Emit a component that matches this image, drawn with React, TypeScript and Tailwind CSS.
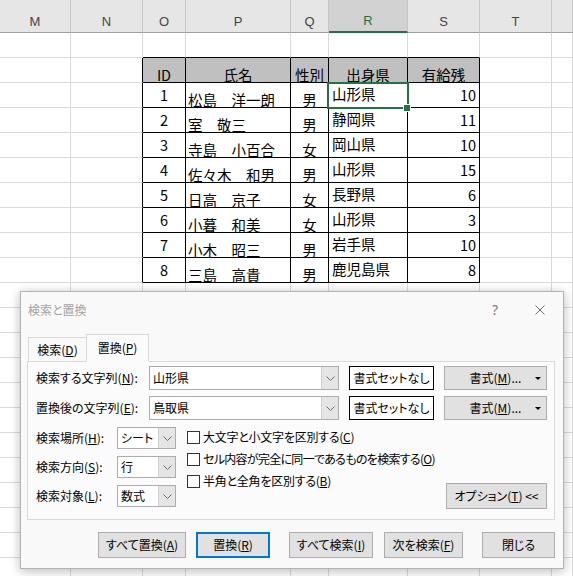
import clsx from "clsx";

const COLS = ["M", "N", "O", "P", "Q", "R", "S", "T", ""];

const HEAD = ["ID", "氏名", "性別", "出身県", "有給残"];

const DATA: [string, string, string, string, string][] = [
  ["1", "松島\u3000洋一朗", "男", "山形県", "10"],
  ["2", "室\u3000敬三", "男", "静岡県", "11"],
  ["3", "寺島\u3000小百合", "女", "岡山県", "10"],
  ["4", "佐々木\u3000和男", "男", "山形県", "15"],
  ["5", "日高\u3000京子", "女", "長野県", "6"],
  ["6", "小暮\u3000和美", "女", "山形県", "3"],
  ["7", "小木\u3000昭三", "男", "岩手県", "10"],
  ["8", "三島\u3000高貴", "男", "鹿児島県", "8"],
];

const ALIGN = [
  "",
  "",
  "justify-center items-end pb-[5px]",
  "justify-start items-end pl-[2px]",
  "justify-center items-end",
  "justify-start items-end pl-[3px] pb-[6px]",
  "justify-end items-end pr-[3px] pb-[5px]",
];

const GRID =
  "grid grid-cols-[71px_72px_43px_105px_38px_79px_72px_72px_1fr]";

function Cell({ r, c }: { r: number; c: number }) {
  const inTable = r >= 1 && r <= 9 && c >= 2 && c <= 6;
  const rightBlack = inTable || (c === 1 && r >= 1 && r <= 9);
  const bottomBlack = inTable || (r === 0 && c >= 2 && c <= 6);
  const selected = r === 2 && c === 5;

  let text = "";
  if (r === 1 && inTable) text = HEAD[c - 2];
  if (r >= 2 && inTable) text = DATA[r - 2][c - 2];

  return (
    <div
      className={clsx(
        "flex border-r border-b whitespace-nowrap",
        rightBlack ? "border-r-black" : "border-r-[#dadada]",
        bottomBlack ? "border-b-black" : "border-b-[#dadada]",
        r === 1 && inTable && "bg-[#c0c0c0] justify-center items-end",
        r >= 2 && inTable && ALIGN[c],
        selected && "relative"
      )}
    >
      {text}
      {selected && (
        <>
          <div className="absolute -left-[2px] -top-[1px] w-[82px] h-[27px] border-2 border-[#217346]" />
          <div className="absolute left-[74px] top-[21px] w-[8px] h-[8px] border border-white bg-[#217346]" />
        </>
      )}
    </div>
  );
}

function Sheet() {
  const rows = Array.from({ length: 22 }, (_, i) => i);
  return (
    <div className="font-['Noto_Sans_CJK_JP',sans-serif] text-[14.5px] leading-none text-black">
      <div className={clsx(GRID, "h-[33px] bg-[#e6e6e6]")}>
        {COLS.map((k) => (
          <div
            key={k || "x"}
            className={clsx(
              "flex items-center justify-center pt-[10px] border-r border-r-[#c6c6c6] font-['Liberation_Sans',sans-serif] text-[13px]",
              k === "R"
                ? "bg-[#d2d2d2] border-b-2 border-b-[#217346] text-[#217346]"
                : "border-b border-b-[#9e9e9e] text-[#444]"
            )}
          >
            {k}
          </div>
        ))}
      </div>
      {rows.map((r) => (
        <div key={r} className={clsx(GRID, "h-[25px]")}>
          {COLS.map((_, c) => (
            <Cell key={c} r={r} c={c} />
          ))}
        </div>
      ))}
    </div>
  );
}

function Chevron() {
  return (
    <svg width="9" height="5" viewBox="0 0 9 5">
      <polyline points="0.5,0.5 4.5,4.5 8.5,0.5" fill="none" stroke="#6b6b6b" strokeWidth="1" />
    </svg>
  );
}

function Combo({ value, className }: { value: string; className: string }) {
  return (
    <div className={clsx("flex border border-[#acacac] bg-white", className)}>
      <div className="flex-1 flex items-center pl-[3px]">{value}</div>
      <div className="w-[17px] flex items-center justify-center bg-[#e5e5e5] border-l border-[#d0d0d0]">
        <Chevron />
      </div>
    </div>
  );
}

function Btn({
  children,
  className,
  focused,
}: {
  children: React.ReactNode;
  className: string;
  focused?: boolean;
}) {
  return (
    <div
      className={clsx(
        "h-[26px] flex items-center justify-center bg-[#e1e1e1] whitespace-nowrap",
        focused ? "border-2 border-[#0078d7]" : "border border-[#adadad]",
        className
      )}
    >
      {children}
    </div>
  );
}

function FormatBtn() {
  return (
    <div className="relative ml-[10px] w-[103px] h-[24px] flex items-center justify-center bg-[#e1e1e1] border border-[#adadad]">
      書式(<u>M</u>)...
      <svg className="absolute right-[5px] top-[10px]" width="6" height="3" viewBox="0 0 6 3">
        <polygon points="0,0 6,0 3,3" fill="#000" />
      </svg>
    </div>
  );
}

function Check({ children, className }: { children: React.ReactNode; className: string }) {
  return (
    <div className="h-[22px] flex items-center whitespace-nowrap">
      <div className="w-[13px] h-[13px] border border-[#333] bg-white" />
      <span className={clsx("ml-[3px]", className)}>{children}</span>
    </div>
  );
}

function Dialog() {
  return (
    <div className="absolute left-[20px] top-[291px] w-[544px] h-[278px] flex flex-col bg-[#f9f9f9] border border-[#b4b4b4] shadow-[0_2px_10px_rgba(0,0,0,0.28)] font-['Noto_Sans_CJK_JP',sans-serif] text-[12px] leading-none text-black [font-feature-settings:'palt']">
      <div className="h-[42px] pb-[7px] flex items-center pl-[7px] pr-[18px]">
        <span className="text-[#a3a3a3]">検索と置換</span>
        <span className="ml-auto text-[14px] text-[#7a7a7a] font-['Noto_Sans',sans-serif]">?</span>
        <svg className="ml-[37px]" width="10" height="10" viewBox="0 0 10 10">
          <path d="M0.5 0.5L9.5 9.5M9.5 0.5L0.5 9.5" stroke="#707070" strokeWidth="1" />
        </svg>
      </div>

      <div className="flex items-end h-[28px] ml-[7px] -mb-px relative z-10">
        <div className="w-[58px] h-[25px] flex items-center justify-center border border-r-0 border-[#d9d9d9]">
          検索(<u>D</u>)
        </div>
        <div className="w-[63px] h-[28px] flex items-center justify-center pb-[1px] border border-[#d9d9d9] border-b-[#fbfbfb] bg-[#fbfbfb]">
          置換(<u>P</u>)
        </div>
      </div>

      <div className="ml-[6px] mr-[8px] border border-[#d9d9d9] bg-[#fbfbfb] pt-[4px] pl-[8px] pr-[7px] pb-[10px]">
        <div className="flex items-center h-[24px]">
          <div className="w-[113px]">
            検索する文字列(<u>N</u>):
          </div>
          <Combo value="山形県" className="w-[190px] h-[24px]" />
          <div className="ml-[10px] w-[85px] h-[24px] flex items-center justify-center border border-black bg-white">
            書式セットなし
          </div>
          <FormatBtn />
        </div>
        <div className="flex items-center h-[24px] mt-[6px]">
          <div className="w-[113px]">
            置換後の文字列(<u>E</u>):
          </div>
          <Combo value="鳥取県" className="w-[190px] h-[24px]" />
          <div className="ml-[10px] w-[85px] h-[24px] flex items-center justify-center border border-black bg-white">
            書式セットなし
          </div>
          <FormatBtn />
        </div>

        <div className="mt-[6px] h-[83px] flex">
          <div className="flex flex-col pt-[1px] gap-[7px]">
            <div className="flex items-center h-[22px]">
              <div className="w-[81px]">
                検索場所(<u>H</u>):
              </div>
              <Combo value="シート" className="w-[59px] h-[22px]" />
            </div>
            <div className="flex items-center h-[22px]">
              <div className="w-[81px]">
                検索方向(<u>S</u>):
              </div>
              <Combo value="行" className="w-[59px] h-[22px]" />
            </div>
            <div className="flex items-center h-[22px]">
              <div className="w-[81px]">
                検索対象(<u>L</u>):
              </div>
              <Combo value="数式" className="w-[59px] h-[22px]" />
            </div>
          </div>
          <div className="ml-[11px] flex flex-col">
            <Check className="tracking-[-0.25px]">
              大文字と小文字を区別する(<u>C</u>)
            </Check>
            <Check className="tracking-[-0.7px]">
              セル内容が完全に同一であるものを検索する(<u>O</u>)
            </Check>
            <Check className="tracking-[-0.25px]">
              半角と全角を区別する(<u>B</u>)
            </Check>
          </div>
          <Btn className="ml-auto self-end w-[101px]">
            オプション(<u>T</u>)&nbsp;&lt;&lt;
          </Btn>
        </div>
      </div>

      <div className="flex justify-end mt-[12px] mr-[8px]">
        <Btn className="w-[88px]">
          すべて置換(<u>A</u>)
        </Btn>
        <Btn className="ml-[10px] w-[74px]" focused>
          置換(<u>R</u>)
        </Btn>
        <Btn className="ml-[19px] w-[84px]">
          すべて検索(<u>I</u>)
        </Btn>
        <Btn className="ml-[11px] w-[79px]">
          次を検索(<u>F</u>)
        </Btn>
        <Btn className="ml-[19px] w-[73px]">閉じる</Btn>
      </div>
    </div>
  );
}

export default function App() {
  return (
    <div className="relative w-[573px] h-[576px] overflow-hidden bg-white">
      <Sheet />
      <Dialog />
    </div>
  );
}
